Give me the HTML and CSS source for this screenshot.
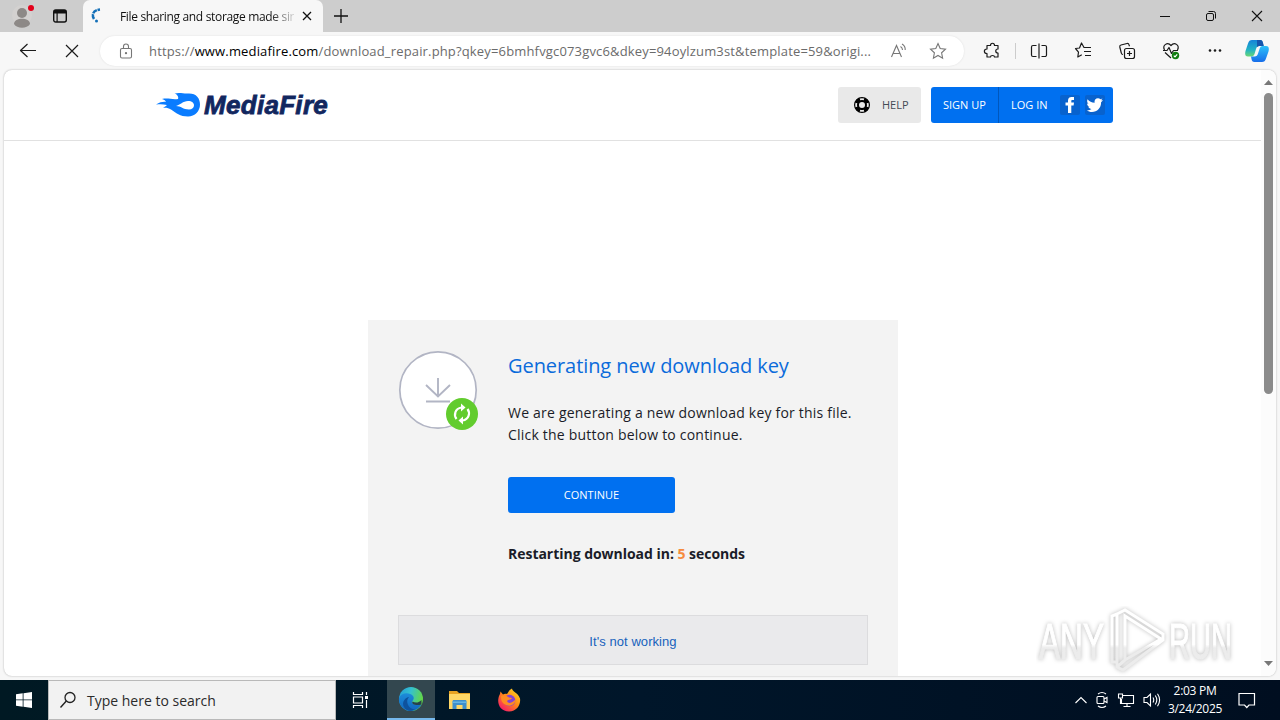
FILE: index.html
```html
<!DOCTYPE html>
<html lang="en">
<head>
    <meta charset="utf-8">
    <title>File sharing and storage made simple</title>
    <link rel="stylesheet" href="styles.css">
</head>
<body>
    <div class="tabbar">
        <div class="tab-tools">
            <svg class="profile" width="26" height="28" viewBox="0 0 26 28"><circle cx="12" cy="13" r="10" fill="#d3d1d0"/><circle cx="12" cy="11" r="5" fill="#8d8987"/><path d="M4 22c0-7 16-7 16 0-3 5-13 5-16 0z" fill="#8d8987"/><circle cx="21" cy="6" r="3" fill="#e3001b"/></svg>
            <svg class="workspace" width="16" height="16" viewBox="0 0 16 16"><rect x="1.7" y="2" width="12.6" height="12" rx="2" fill="none" stroke="#111" stroke-width="1.4"/><path d="M2 2h12v3.5H2zM4.5 5h1.2v9H4.500z" fill="#111"/></svg>
        </div>
        <div class="tab">
            <svg width="16" height="16" viewBox="0 0 16 16"><path d="M3 11C0 6 3 2 9 1.500" fill="none" stroke="#1470b8" stroke-width="2.500" stroke-dasharray="5 .8"/><circle cx="5.500" cy="13" r="1.500" fill="#1470b8"/></svg>
            <span class="tab-title">File sharing and storage made simple</span>
            <svg class="tab-close" width="10" height="10" viewBox="0 0 10 10"><path d="M1 1l8 8M9 1L1 9" stroke="#111" stroke-width="1.300"/></svg>
        </div>
        <svg class="new-tab" width="14" height="14" viewBox="0 0 14 14"><path d="M7 0v14M0 7h14" stroke="#111" stroke-width="1.300"/></svg>
        <div class="window-buttons">
            <svg width="46" height="32" viewBox="0 0 46 32"><path d="M18 16.500h10" stroke="#111"/></svg>
            <svg width="46" height="32" viewBox="0 0 46 32"><rect x="18.500" y="13.500" width="7" height="7" rx="1.500" fill="none" stroke="#111"/><path d="M20.500 11.500h5a2 2 0 0 1 2 2v5" fill="none" stroke="#111"/></svg>
            <svg width="46" height="32" viewBox="0 0 46 32"><path d="M18 11l10 10M28 11L18 21" stroke="#111" stroke-width="1.100"/></svg>
        </div>
    </div>

    <div class="toolbar">
        <svg class="tool" viewBox="0 0 44 38"><path d="M30 18.500H14.500M21.500 12l-7 6.500 7 6.500"/></svg>
        <svg class="tool" viewBox="0 0 44 38"><path d="M16 13l12 12M28 13L16 25"/></svg>
        <div class="address">
            <svg class="lock" width="14" height="16" viewBox="0 0 14 16"><rect x="1.500" y="5.500" width="11" height="9.500" rx="1.500"/><path d="M4.500 5.500V3.500a2.500 2.500 0 0 1 5 0v2"/><circle cx="7" cy="10.200" r=".6"/></svg>
            <span class="url">https://<b>www.mediafire.com</b>/download_repair.php?qkey=6bmhfvgc073gvc6&amp;dkey=94oylzum3st&amp;template=59&amp;origi...</span>
            <svg class="read" width="18" height="16" viewBox="0 0 18 16"><path d="M1.500 14L6.500 2.500 11.500 14M3.200 10.500h6.600M10.500 3.500q2 1.200 2 3.500M12 1q3.500 2 3.200 6"/></svg>
            <svg class="fav" width="18" height="18" viewBox="0 0 18 18"><path d="M9 1.500l2.200 5 5.300.6-3.900 3.700 1 5.400L9 13.500l-4.600 2.700 1-5.400L1.500 7.100l5.300-.6z"/></svg>
        </div>
        <svg class="tool ext" viewBox="0 0 44 38"><path d="M17 13.500h3.500c0-3 4-3 4 0H28v3.500c-3 0-3 4 0 4V25h-3.500c0-2-4-2-4 0H17v-3.500c-3.500 0-3.500-4.500 0-4.500z"/></svg>
        <div class="divider"></div>
        <svg class="tool" viewBox="0 0 44 38"><path d="M19.500 13.500H16a1.500 1.500 0 0 0-1.500 1.500v8a1.500 1.500 0 0 0 1.500 1.500h3.500M24.500 13.500H28a1.500 1.500 0 0 1 1.500 1.500v8a1.500 1.500 0 0 1-1.500 1.500h-3.500M22 11.500v15"/></svg>
        <svg class="tool" viewBox="0 0 44 38"><path d="M25 15.500h-2L20.500 11l-2 5-4 .5 3 3.700-.7 4.800 4-2.200M24 15.500h6M23 19.500h7M24 23.500h6"/></svg>
        <svg class="tool" viewBox="0 0 44 38"><rect x="19.500" y="16.500" width="10" height="10" rx="2"/><path d="M24.500 19v5M22 21.500h5M18 22.500c-1 0-1.500-.5-1.700-1.500l-1.500-6c-.3-1 .2-1.700 1.200-2l6-1.500c1-.2 1.700.2 2 1.200l.5 1.500"/></svg>
        <svg class="tool" viewBox="0 0 44 38"><path d="M15.500 18c-2.500-5 3-8.500 6.500-4.500 3.500-4 9-.5 6.500 4.500M14 18.500h4l2-3 2.500 6 2-3H29M16 20.500l6 5.500"/><circle cx="26.500" cy="23.500" r="3.700" fill="#107c10" stroke="none"/><path d="M24.800 23.700l1.200 1.200 2.200-2.500" stroke="#fff"/></svg>
        <svg class="tool dots" viewBox="0 0 44 38"><circle cx="17" cy="18.500" r="1.300"/><circle cx="22" cy="18.500" r="1.300"/><circle cx="27" cy="18.500" r="1.300"/></svg>
        <svg class="copilot" viewBox="0 0 24 24"><defs><linearGradient id="cpa" x1="0" y1="0" x2="0" y2="1"><stop offset="0" stop-color="#1583d9"/><stop offset=".6" stop-color="#22b3c4"/><stop offset="1" stop-color="#6bd774"/></linearGradient><linearGradient id="cpb" x1="0" y1="0" x2="0" y2="1"><stop offset="0" stop-color="#2cc1fa"/><stop offset="1" stop-color="#176dea"/></linearGradient></defs><path d="M7 1h8c2 0 2.500 1 3 3l.7 3H14c-2 0-2.500 1.500-3 3l-1.500 5c-.5 1.500-1.500 2.500-3 2.500H3C0 17.500-.2 15 .5 12L3 4.500C3.700 2 5 1 7 1z" fill="url(#cpa)"/><path d="M12 1h3c2 0 2.500 1 3 3l.7 3H14l-2 1z" fill="#1556ad"/><path d="M17 23H9.500c-2 0-2.600-1-3-3L6 17.500h3.500c2 0 3-1 3.500-3L14.500 10c.5-2 1.500-3 3-3H21c3 0 3.200 2.500 2.500 5.500L21 19.500c-.7 2.500-2 3.500-4 3.500z" fill="url(#cpb)"/></svg>
    </div>

    <div class="viewport">
        <div class="page">
            <div class="header">
                <div class="header-inner">
                    <div class="logo">
                        <svg width="46" height="26" viewBox="0 0 46 26"><path d="M0 12.500C4 10 8 9.500 10 10 9 8 8 7.500 6 7c6-1.500 10 1 16 0 1-2-1-5-3.500-5.500C24 0 28 2 32 1.500c8-.5 12 4.500 12 11S39 24.500 32 24.500c-8 0-12-3.500-17-7-3-2-6-2-8-1.500 2-1.500 3.500-2.200 4-3-4-1-7-1-11-.5zM20 14c5 0 7 3.500 13 3.500 3 0 5-1.500 5-4.200C38 11 36 9 32 9c-5 0-8 4-12 5z" fill="#0a7cff" fill-rule="evenodd"/></svg>
                        <span class="logo-text">MediaFire</span>
                    </div>
                    <a class="btn-help">
                        <svg width="16" height="16" viewBox="0 0 16 16"><circle cx="8" cy="8" r="5.500" fill="none" stroke="#000" stroke-width="5"/><g fill="none" stroke="#e9e9e9" stroke-width="1.800"><path d="M6 2.400q2-.6 4 0M6 13.600q2 .6 4 0M2.400 6q-.6 2 0 4M13.600 6q.6 2 0 4"/></g></svg>
                        <span>HELP</span>
                    </a>
                    <div class="account">
                        <a class="signup"><span>SIGN UP</span></a>
                        <a class="login"><span>LOG IN</span>
                            <svg class="social" width="20" height="20" viewBox="0 0 20 20"><path d="M8 18v-7.500H5.500v-3H8V5.500C8 3 9.500 2 11.500 2H14v3h-1.500c-1 0-1.200.4-1.200 1.200v1.300H14l-.4 3h-2.300V18z" fill="#fff"/></svg>
                            <svg class="social" width="20" height="20" viewBox="0 0 20 20"><path d="M18 5.300l-1.900 2C16.300 13 12 17 7 17c-2 0-3.800-.6-5.200-1.500 1.800.1 3.500-.4 4.700-1.400-1.500-.1-2.700-1-3.100-2.300h1.400C3.200 11.400 2.100 10 2.100 8.400l1.500.4C2.100 7.700 1.700 5.800 2.600 4.200 4.300 6.300 6.700 7.500 9.600 7.700 9.100 5.200 10.600 3.200 13 3.200c1 0 1.800.4 2.400 1l2.100-.8-1.400 1.900z" fill="#fff"/></svg>
                        </a>
                    </div>
                </div>
            </div>

            <div class="card">
                <div class="card-main">
                    <svg class="download" width="82" height="82" viewBox="0 0 82 82"><circle cx="40" cy="40" r="38.200" fill="#fff" stroke="#b2b5c4" stroke-width="1.700"/><path d="M40 28v18M28 35l12 11.500L52 35M28 51.500h24" fill="none" stroke="#b2b5c4" stroke-width="1.900"/><circle cx="64" cy="64" r="16" fill="#62cc2e"/><path d="M58.500 69C55.500 65 57 58.500 63.500 57.500M69.500 59C72.500 63 71 69.500 64.500 70.500" fill="none" stroke="#fff" stroke-width="2.200"/><path d="M63 53.500l4.500 4-4.500 4zM65 66.500l-4.500 4 4.500 4z" fill="#fff"/></svg>
                    <div class="card-text">
                        <h1><span>Generating new download key</span></h1>
                        <p>We are generating a new download key for this file.<br>Click the button below to continue.</p>
                        <a class="continue"><span>CONTINUE</span></a>
                        <div class="restart">Restarting download in: <span class="count">5</span> seconds</div>
                    </div>
                </div>
                <a class="not-working">It's not working</a>
            </div>
        </div>
        <div class="scrollbar">
            <svg width="9" height="5" viewBox="0 0 9 5"><path d="M0 5l4.500-5L9 5z"/></svg>
            <div class="thumb"></div>
            <svg width="9" height="5" viewBox="0 0 9 5"><path d="M0 0l4.500 5L9 0z"/></svg>
        </div>
    </div>

    <svg class="watermark" width="210" height="70" viewBox="0 0 210 70">
        <defs><linearGradient id="fade" gradientUnits="userSpaceOnUse" x1="0" y1="0" x2="0" y2="70"><stop offset=".55" stop-color="#fff"/><stop offset=".6" stop-color="#ececec"/></linearGradient></defs>
        <g class="mark">
            <path d="M81 56h-5V10l5-2M81 8l8-4 38 24v6L87 64l-6-3zM89 10v44l36-21zM81 61l8-7"/>
            <text x="3" y="53" textLength="65" lengthAdjust="spacingAndGlyphs">ANY</text>
            <text x="133" y="53" textLength="63" lengthAdjust="spacingAndGlyphs">RUN</text>
        </g>
    </svg>

    <div class="taskbar">
        <div class="start"><svg width="16" height="16" viewBox="0 0 16 16"><path d="M0 2.300L6.700 1.300v6.200H0zM7.500 1.200L16 0v7.500H7.500zM0 8.300h6.700v6.400L0 13.700zM7.500 8.300H16V16l-8.500-1.200z" fill="#fff"/></svg></div>
        <div class="search">
            <svg width="18" height="18" viewBox="0 0 18 18"><circle cx="11" cy="6.500" r="5" fill="none" stroke="#222" stroke-width="1.300"/><path d="M7.300 10L1.500 16.500" stroke="#222" stroke-width="1.400"/></svg>
            <span>Type here to search</span>
        </div>
        <div class="task"><svg width="18" height="18" viewBox="0 0 18 18"><path d="M2.500 1v2.500h9V1M2.500 6h9v6h-9zM2.500 17v-2.500h9V17M15.500 1v3M15.500 9v8" fill="none" stroke="#fff" stroke-width="1.200"/><path d="M14 5h3v3h-3z" fill="#fff"/></svg></div>
        <div class="task active">
            <svg width="26" height="26" viewBox="0 0 26 26"><defs><linearGradient id="ega" x1="0" y1="0" x2="1" y2="0.300"><stop offset="0" stop-color="#229bd8"/><stop offset=".5" stop-color="#35c1cf"/><stop offset="1" stop-color="#62d64b"/></linearGradient><linearGradient id="egb" x1="0" y1="0" x2="0" y2="1"><stop offset="0" stop-color="#1c8cda"/><stop offset="1" stop-color="#1266bd"/></linearGradient></defs><circle cx="13" cy="13" r="12" fill="url(#ega)"/><path d="M1 12C3 6 12 6 15 10c1.500 2 .5 4-1 5.500-.5 2 2.500 4 9.500 3C19 26 10 26.500 5 22c-3-2.700-4.500-6-4-10z" fill="url(#egb)"/><path d="M11 11c-4 4-1 12 6 12.500-4 2-7 1.500-9.500-.5-5-5-1.500-11 3.500-12z" fill="#0e529d"/><path d="M14.500 15.500c3 2 7 1 9-1.500v4.500c-6 1.500-10.500-.5-9-3z" fill="#28424b"/></svg>
        </div>
        <div class="task wide"><svg width="22" height="20" viewBox="0 0 22 20"><path d="M0 1h8l2 2h11v4H0z" fill="#e8a322"/><path d="M0 4h21v15H0z" fill="#ffd766"/><path d="M3.500 19v-7.500c0-1 .5-1.500 1.500-1.500h11c1 0 1.500.5 1.500 1.500V19h-4v-4h-6v4z" fill="#3f8fcb"/><path d="M3.500 11.500h14V13h-14z" fill="#65b4e4"/></svg></div>
        <div class="task"><svg width="24" height="24" viewBox="0 0 24 24"><defs><linearGradient id="ff" x1="1" y1="0" x2="0.200" y2="1"><stop offset="0" stop-color="#ffe226"/><stop offset=".5" stop-color="#ff8a16"/><stop offset="1" stop-color="#f5156c"/></linearGradient></defs><path d="M3.500 3.500L6 6.500c1-1 3-1 4-.5L12 3c1-1.500 2-2 3-2.500 0 3 6 4 8 10 1 6-3 13-11 13C4 23.500 0 17 1.500 10c.3-2 1-3 1.500-4z" fill="url(#ff)"/><circle cx="12.500" cy="12.500" r="5.800" fill="#8442d5"/><path d="M4 8c3-2 6 0 8 1.500l3 .5c-1 2-4 1.500-5 3 2 4 6 1 9-2-1 6-6 8-10 6S4 13 4 8z" fill="#ff8c22"/></svg></div>
        <div class="tray">
            <svg width="12" height="12" viewBox="0 0 12 12"><path d="M.5 9L6 3.500 11.500 9"/></svg>
            <svg width="14" height="18" viewBox="0 0 14 18"><rect x="2" y="5.500" width="7" height="7" rx="1"/><path d="M9 8l3-1.500v5L9 10M3 3q4-3 8 0M3 15q4 3 8 0"/></svg>
            <svg width="18" height="16" viewBox="0 0 18 16"><path d="M6 3.500h10.500v8H4.500V7M10 11.500v3M6.500 14.500h7M1.500 2h4v4h-4zM3.500 6v6"/></svg>
            <svg width="18" height="16" viewBox="0 0 18 16"><path d="M1 5.500h3L7.500 2v12L4 10.500H1zM10 5.500q1.500 2.500 0 5M12.300 3.500q3 4.500 0 9M14.500 1.800q4.200 6.200 0 12.400"/></svg>
        </div>
        <div class="clock"><span>2:03 PM</span><span>3/24/2025</span></div>
        <svg class="notice" width="18" height="18" viewBox="0 0 18 18"><path d="M1 2.500h15.500v11.500H11L8.800 16.500 6.500 14H1z" fill="none" stroke="#fff" stroke-width="1.200"/></svg>
    </div>
</body>
</html>
```
FILE: styles.css
```css
* {
    box-sizing: border-box;
}
body {
    margin: 0;
    width: 1280px;
    height: 720px;
    overflow: hidden;
    background: #f7f7f7;
    font-family: "Open Sans", sans-serif;
    display: flex;
    flex-direction: column;
    position: relative;
}
svg {
    display: block;
    flex: none;
}
span {
    white-space: nowrap;
}

/* browser tabs */
.tabbar {
    height: 32px;
    flex: none;
    background: #cdcdcd;
    display: flex;
    align-items: center;
}
.tab-tools {
    width: 83px;
    height: 32px;
    display: flex;
    align-items: center;
    padding-left: 10px;
    border-bottom-right-radius: 6px;
}
.workspace {
    margin-left: 16px;
}
.tab {
    width: 240px;
    height: 32px;
    background: #f7f7f7;
    border-radius: 7px 7px 0 0;
    display: flex;
    align-items: center;
    padding-left: 8px;
}
.tab-title {
    width: 174px;
    margin-left: 13px;
    overflow: hidden;
    font-size: 12px;
    letter-spacing: -0.33px;
    color: #111;
    -webkit-mask-image: linear-gradient(to right, #000 150px, transparent 178px);
}
.tab-close {
    margin-left: 8px;
}
.new-tab {
    margin-left: 11px;
}
.window-buttons {
    display: flex;
    margin-left: auto;
}

/* toolbar */
.toolbar {
    height: 38px;
    flex: none;
    display: flex;
    align-items: center;
    padding-left: 6px;
}
.tool {
    width: 44px;
    height: 38px;
    fill: none;
    stroke: #1b1b1b;
    stroke-width: 1.2;
    stroke-linejoin: round;
}
.dots {
    fill: #1b1b1b;
    stroke: none;
}
.address {
    width: 864px;
    height: 30px;
    margin-left: 6px;
    background: #fff;
    border-radius: 15px;
    box-shadow: 0 0 2px #ddd;
    display: flex;
    align-items: center;
    padding-left: 19px;
}
.lock, .read, .fav {
    fill: none;
    stroke: #777;
    stroke-width: 1.1;
}
.url {
    width: 722px;
    margin-left: 16px;
    font-size: 13px;
    letter-spacing: 0.16px;
    color: #6b6b6b;
}
.url b {
    font-weight: normal;
    color: #000;
}
.read {
    margin-left: 19px;
}
.fav {
    margin-left: 21px;
}
.ext {
    margin-left: 6px;
}
.divider {
    width: 1px;
    height: 16px;
    background: #ccc;
    margin: 0 1px 0 1px;
}
.copilot {
    width: 24px;
    height: 24px;
    margin-left: 8px;
}

/* web page */
.viewport {
    height: 606px;
    flex: none;
    margin: 0 4px;
    background: #fff;
    border-radius: 8px;
    box-shadow: 0 0 2px #aaa;
    overflow: hidden;
    display: flex;
}
.page {
    width: 1257px;
}
.header {
    height: 71px;
    border-bottom: 1px solid #e1e1e1;
}
.header-inner {
    width: 957px;
    height: 70px;
    margin-left: 152px;
    display: flex;
    align-items: center;
}
.logo {
    display: flex;
    align-items: center;
    margin-right: auto;
}
.logo-text {
    font-family: "Liberation Sans", Arial, sans-serif;
    font-weight: bold;
    font-style: italic;
    font-size: 26px;
    line-height: 26px;
    letter-spacing: 0.3px;
    -webkit-text-stroke: 0.8px #12275f;
    color: #12275f;
    margin-left: 2px;
}
.btn-help {
    width: 83px;
    height: 36px;
    margin-right: 10px;
    padding-left: 16px;
    display: flex;
    align-items: center;
    gap: 12px;
    background: #e9e9e9;
    border-radius: 3px;
    font-size: 11px;
    color: #444b55;
}
.account {
    display: flex;
    width: 182px;
    height: 36px;
    background: #0070f0;
    border-radius: 3px;
    font-size: 11px;
    color: #fff;
}
.btn-help span, .account span, .continue span {
    padding-bottom: 1px;
}
.signup, .login {
    display: flex;
    align-items: center;
    padding-left: 12px;
}
.signup {
    width: 68px;
    border-right: 1px solid #0057bd;
}
.login span {
    width: 49px;
}
.social {
    background: #0862ce;
    border-radius: 2px;
    margin-right: 5px;
}
.card {
    width: 530px;
    height: 380px;
    margin: 179px auto 0 364px;
    padding: 30px;
    background: #f3f3f3;
}
.card-main {
    height: 265px;
    display: flex;
}
.download {
    margin-right: 28px;
}
.card-text {
    color: #1a1c28;
}
h1 {
    margin: 2px 0 0;
    font-size: 20px;
    line-height: 28px;
    letter-spacing: -0.07px;
    font-weight: normal;
    color: #0b6bdb;
}
p {
    margin: 22px 0 31px;
    font-size: 14px;
    line-height: 22px;
    letter-spacing: 0.21px;
    white-space: nowrap;
}
.continue {
    width: 167px;
    height: 36px;
    display: flex;
    align-items: center;
    justify-content: center;
    background: #0070f0;
    border-radius: 3px;
    color: #fff;
    font-size: 11px;
}
.restart {
    margin-top: 31px;
    font-size: 14px;
    line-height: 20px;
    letter-spacing: -0.03px;
    font-weight: bold;
    white-space: nowrap;
}
.count {
    color: #f68b3e;
}
.not-working {
    width: 470px;
    height: 50px;
    display: flex;
    align-items: center;
    justify-content: center;
    padding-top: 3px;
    background: #eaeaec;
    border: 1px solid #dcdcde;
    color: #1762bd;
    font-family: "Liberation Sans", Arial, sans-serif;
    font-size: 13px;
    letter-spacing: 0.06px;
}
.scrollbar {
    width: 15px;
    background: #fcfcfc;
    display: flex;
    flex-direction: column;
    align-items: center;
    padding: 10px 0;
    fill: #777;
}
.thumb {
    width: 9px;
    height: 301px;
    margin: 8px 0 auto;
    background: #8b8b8b;
    border-radius: 5px;
}

/* overlay mark */
.watermark {
    position: absolute;
    left: 1036px;
    top: 606px;
}
.mark {
    fill: none;
    stroke: url(#fade);
    stroke-width: 3;
    filter: drop-shadow(0 0 2px #bbb);
}
.mark text {
    fill: url(#fade);
    stroke-width: 1.2;
    font-family: "Liberation Sans", Arial, sans-serif;
    font-size: 50px;
}

/* taskbar */
.taskbar {
    height: 40px;
    flex: none;
    margin-top: 4px;
    background: linear-gradient(to right, #001923, #00162a 50%, #000e20);
    display: flex;
    align-items: center;
    color: #fff;
}
.start {
    width: 48px;
    display: flex;
    justify-content: center;
}
.search {
    width: 288px;
    height: 40px;
    background: #f2f2f2;
    border: 1px solid #b9b9b9;
    display: flex;
    align-items: center;
    padding-left: 10px;
    gap: 10px;
    color: #2b2b2b;
    font-size: 14px;
}
.task {
    width: 48px;
    height: 40px;
    display: flex;
    align-items: center;
    justify-content: center;
}
.active {
    margin-left: 3px;
    background: #33474f;
    border-bottom: 2px solid #76b9ed;
}
.wide {
    width: 50px;
}
.tray {
    display: flex;
    align-items: center;
    gap: 8px;
    margin-left: auto;
    fill: none;
    stroke: #fff;
    stroke-width: 1.1;
}
.clock {
    width: 64px;
    margin-left: 2px;
    display: flex;
    flex-direction: column;
    align-items: center;
    font-size: 12px;
    line-height: 18px;
    letter-spacing: -0.3px;
}
.notice {
    margin: 0 24px 0 11px;
}
```
